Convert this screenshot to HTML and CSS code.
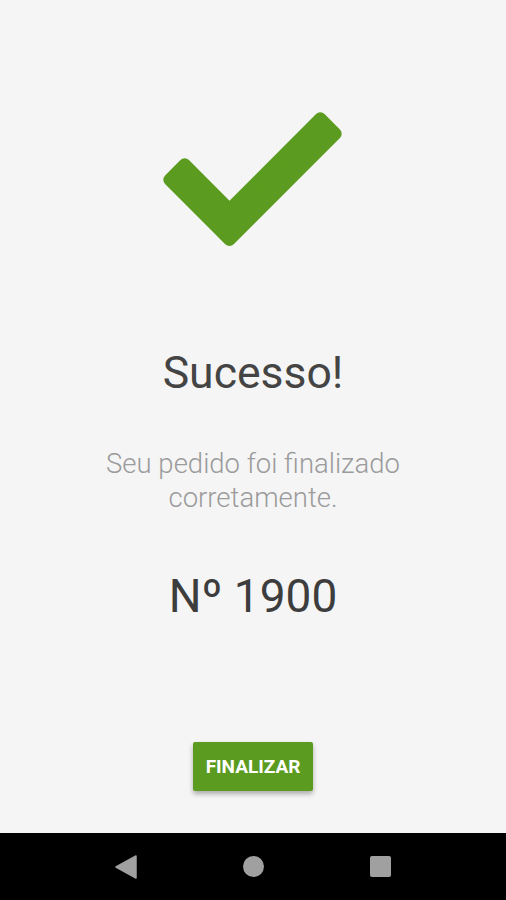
FILE: index.html
```html
<!DOCTYPE html>
<html lang="pt-BR">
<head>
    <meta charset="UTF-8">
    <meta name="viewport" content="width=device-width, initial-scale=1.0">
    <title>Sucesso</title>
    <link rel="stylesheet" href="styles.css">
</head>
<body>
    <main class="screen">
        <svg class="check" width="190" height="150" viewBox="0 0 190 150">
            <polygon points="26.7,59.3 71.5,104.2 162.3,13.3 177.7,28.7 71.5,134.9 11.3,74.7"
                     fill="#5b9b1f" stroke="#5b9b1f" stroke-width="12" stroke-linejoin="round"/>
        </svg>
        <h1 class="title">Sucesso!</h1>
        <p class="message">Seu pedido foi finalizado<br>corretamente.</p>
        <p class="order">Nº 1900</p>
        <button class="finish">FINALIZAR</button>
    </main>

    <nav class="navbar">
        <svg width="22" height="24" viewBox="0 0 22 24">
            <polygon points="21,1 21,23 1,12" fill="#a0a0a0" stroke="#a0a0a0" stroke-width="1.5" stroke-linejoin="round"/>
        </svg>
        <span class="nav-home"></span>
        <span class="nav-recent"></span>
    </nav>
</body>
</html>
```

FILE: styles.css
```css
body {
    margin: 0;
    padding: 0;
    background: #f5f5f5;
    font-family: Roboto, "Noto Sans", sans-serif;
}
.screen {
    height: 833px;
    box-sizing: border-box;
    padding-top: 105px;
    display: flex;
    flex-direction: column;
    align-items: center;
    text-align: center;
}
.check {
    display: block;
}
.title {
    margin: 92px 0 0;
    font-size: 44.5px;
    line-height: 52px;
    font-weight: 400;
    color: #444;
}
.message {
    margin: 48px 0 0;
    font-size: 27.5px;
    line-height: 34px;
    font-weight: 300;
    color: #9b9b9b;
}
.order {
    margin: 54px 0 0;
    font-size: 46px;
    line-height: 54px;
    font-weight: 400;
    color: #3d3d3d;
}
.finish {
    margin-top: 119px;
    width: 120px;
    height: 49px;
    border: none;
    border-radius: 2px;
    background: #5b9b1f;
    color: white;
    font-family: Roboto, sans-serif;
    font-size: 19px;
    font-weight: 700;
    box-shadow: 0 3px 5px rgba(0,0,0,0.3);
    cursor: pointer;
}
.navbar {
    height: 67px;
    background: #000;
    display: flex;
    align-items: center;
    justify-content: space-between;
    padding: 0 115px 0 115px;
}
.nav-home {
    width: 21px;
    height: 21px;
    border-radius: 50%;
    background: #a0a0a0;
}
.nav-recent {
    width: 21px;
    height: 21px;
    border-radius: 2px;
    background: #a0a0a0;
}
```
